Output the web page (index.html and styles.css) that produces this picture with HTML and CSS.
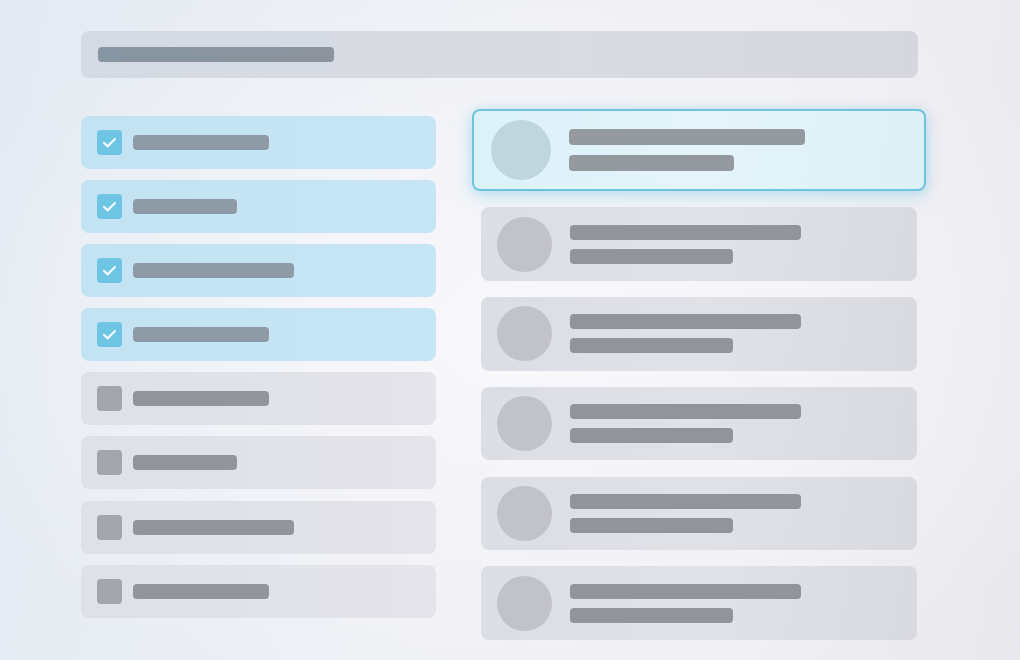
FILE: index.html
```html
<!DOCTYPE html>
<html>
<head>
<meta charset="utf-8">
<link rel="stylesheet" href="styles.css">
</head>
<body>
<div class="page">
  <div class="search"><div class="bar search-bar"></div></div>
  <div class="main">
    <div class="list">
      <div class="item checked"><div class="box"><svg viewBox="0 0 25 25"><path d="M7 12.8l3.6 3.6L18 9" /></svg></div><div class="bar" style="width:136px"></div></div>
      <div class="item checked"><div class="box"><svg viewBox="0 0 25 25"><path d="M7 12.8l3.6 3.6L18 9" /></svg></div><div class="bar" style="width:104px"></div></div>
      <div class="item checked"><div class="box"><svg viewBox="0 0 25 25"><path d="M7 12.8l3.6 3.6L18 9" /></svg></div><div class="bar" style="width:161px"></div></div>
      <div class="item checked"><div class="box"><svg viewBox="0 0 25 25"><path d="M7 12.8l3.6 3.6L18 9" /></svg></div><div class="bar" style="width:136px"></div></div>
      <div class="item"><div class="box"></div><div class="bar" style="width:136px"></div></div>
      <div class="item"><div class="box"></div><div class="bar" style="width:104px"></div></div>
      <div class="item"><div class="box"></div><div class="bar" style="width:161px"></div></div>
      <div class="item"><div class="box"></div><div class="bar" style="width:136px"></div></div>
    </div>
    <div class="cards">
      <div class="card active">
        <div class="avatar"></div>
        <div class="lines"><div class="bar l1"></div><div class="bar l2"></div></div>
      </div>
      <div class="card"><div class="avatar"></div><div class="lines"><div class="bar l1"></div><div class="bar l2"></div></div></div>
      <div class="card"><div class="avatar"></div><div class="lines"><div class="bar l1"></div><div class="bar l2"></div></div></div>
      <div class="card"><div class="avatar"></div><div class="lines"><div class="bar l1"></div><div class="bar l2"></div></div></div>
      <div class="card"><div class="avatar"></div><div class="lines"><div class="bar l1"></div><div class="bar l2"></div></div></div>
      <div class="card"><div class="avatar"></div><div class="lines"><div class="bar l1"></div><div class="bar l2"></div></div></div>
    </div>
  </div>
</div>
</body>
</html>
```
FILE: styles.css
```css
html, body {
  margin: 0;
  padding: 0;
  width: 1020px;
  height: 660px;
  overflow: hidden;
  font-family: "Liberation Sans", Arial, sans-serif;
}
body {
  background:
    radial-gradient(ellipse 60% 60% at 52% 50%, rgba(250,249,252,0.9), rgba(250,249,252,0) 100%),
    linear-gradient(100deg, #e4eaf3 0%, #eef0f5 45%, #efeef3 75%, #e9e8ee 100%);
}
.page {
  padding: 31px 0 0 81px;
}
.search {
  width: 837px;
  height: 47px;
  box-sizing: border-box;
  border-radius: 8px;
  background: linear-gradient(90deg, #d4dae3, #d9dbe2 60%, #d6d6de);
  padding: 16px 17px;
}
.bar {
  height: 15px;
  border-radius: 4px;
  background: #92969e;
}
.search-bar {
  width: 236px;
  background: linear-gradient(90deg, #8796a3, #8a949f 70%, #8c939c);
}
.main {
  display: flex;
  align-items: flex-start;
  margin-top: 31px;
}
.list {
  width: 355px;
  display: flex;
  flex-direction: column;
  gap: 11.1px;
  padding-top: 7px;
}
.item {
  height: 53px;
  border-radius: 8px;
  background: linear-gradient(90deg, #dfe1e8, #e4e4ea);
  display: flex;
  align-items: center;
  padding-left: 16px;
  gap: 11px;
}
.item.checked {
  background: linear-gradient(90deg, #c3e3f3, #c6e6f5);
}
.item.checked .bar {
  background: #8e9aa6;
}
.item .bar {
  background: #93959d;
}
.box {
  width: 25px;
  height: 25px;
  border-radius: 4px;
  background: #a3a5ac;
}
.checked .box {
  background: #6ec5e3;
}
.box svg {
  display: block;
  width: 25px;
  height: 25px;
  fill: none;
  stroke: #eef9fd;
  stroke-width: 2.2;
  stroke-linecap: round;
  stroke-linejoin: round;
}
.cards {
  margin-left: 45px;
  width: 436px;
  display: flex;
  flex-direction: column;
  gap: 16.25px;
}
.card {
  height: 73.5px;
  border-radius: 8px;
  background: linear-gradient(100deg, #dcdee5, #e1e1e8 50%, #d9d9e0);
  display: flex;
  align-items: center;
  padding-left: 16px;
  gap: 18px;
}
.avatar {
  width: 55px;
  height: 55px;
  border-radius: 50%;
  background: #c2c3c9;
  flex: none;
}
.lines {
  display: flex;
  flex-direction: column;
  gap: 9px;
}
.l1 { width: 231px; }
.l2 { width: 163px; }
.card .bar { background: #92949c; }
.card.active {
  margin: 0 -9px;
  height: 82px;
  box-sizing: border-box;
  border: 2px solid #6cc4dd;
  background: linear-gradient(100deg, #dcf1f9, #e4f4fa 50%, #ddf0f7);
  padding-left: 17px;
  gap: 18px;
  box-shadow: 0 6px 18px rgba(110, 196, 225, 0.35), 0 0 8px rgba(110, 196, 225, 0.25);
}
.card.active .avatar {
  width: 60px;
  height: 60px;
  background: #c0d6de;
}
.card.active .lines { gap: 10px; }
.card.active .l1 { width: 236px; }
.card.active .l2 { width: 165px; }
.card.active .bar { background: #94999f; height: 16px; }
```
